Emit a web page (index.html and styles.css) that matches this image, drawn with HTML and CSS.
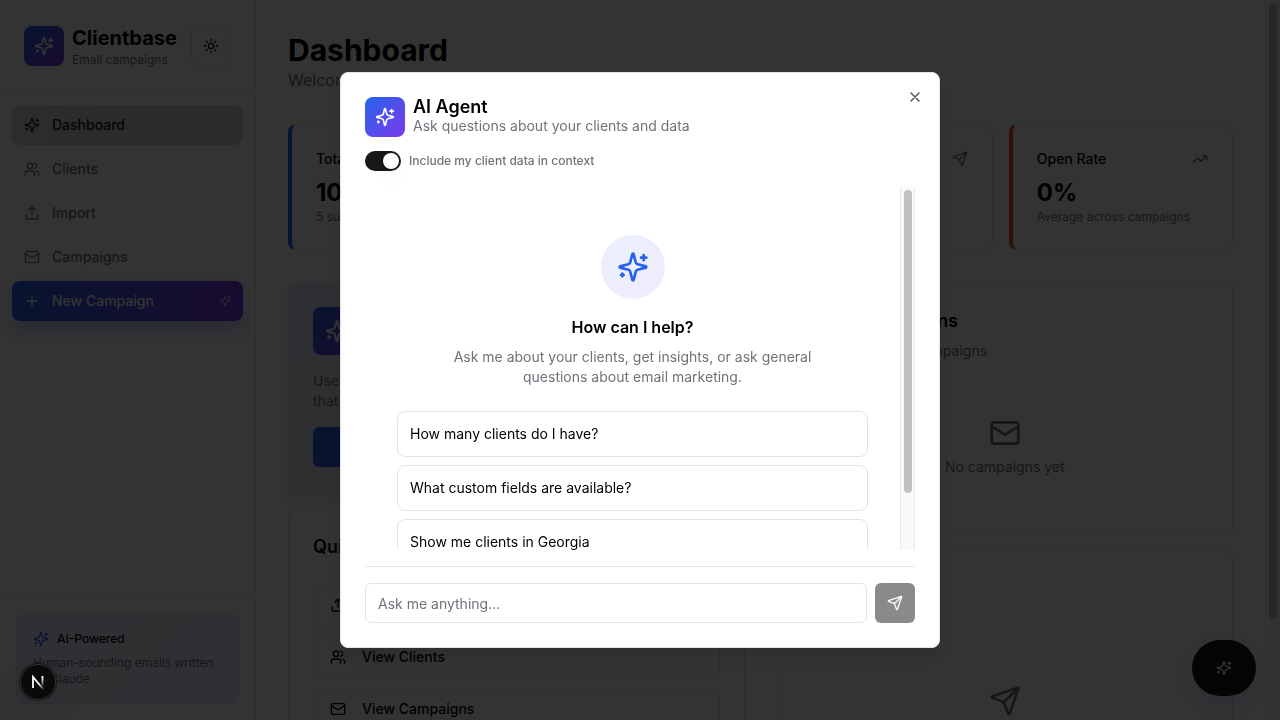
FILE: index.html
```html
<!DOCTYPE html>
<html lang="en">
<head>
<meta charset="utf-8">
<meta name="viewport" content="width=device-width, initial-scale=1">
<title>Clientbase</title>
<link rel="stylesheet" href="styles.css">
</head>
<body>
<svg class="sprite" aria-hidden="true">
  <symbol id="sparkles" viewBox="0 0 24 24"><path d="M9.937 15.5A2 2 0 0 0 8.5 14.063l-6.135-1.582a.5.5 0 0 1 0-.962L8.5 9.936A2 2 0 0 0 9.937 8.5l1.582-6.135a.5.5 0 0 1 .963 0L14.063 8.5A2 2 0 0 0 15.5 9.937l6.135 1.581a.5.5 0 0 1 0 .964L15.5 14.063a2 2 0 0 0-1.437 1.437l-1.582 6.135a.5.5 0 0 1-.963 0z"/><path d="M20 3v4M22 5h-4M4 17v2M5 18H3"/></symbol>
  <symbol id="users" viewBox="0 0 24 24"><path d="M16 21v-2a4 4 0 0 0-4-4H6a4 4 0 0 0-4 4v2"/><circle cx="9" cy="7" r="4"/><path d="M22 21v-2a4 4 0 0 0-3-3.87M16 3.13a4 4 0 0 1 0 7.75"/></symbol>
  <symbol id="upload" viewBox="0 0 24 24"><path d="M21 15v4a2 2 0 0 1-2 2H5a2 2 0 0 1-2-2v-4M17 8l-5-5-5 5M12 3v12"/></symbol>
  <symbol id="mail" viewBox="0 0 24 24"><rect x="2" y="4" width="20" height="16" rx="2"/><path d="m22 7-8.97 5.7a1.94 1.94 0 0 1-2.06 0L2 7"/></symbol>
  <symbol id="plus" viewBox="0 0 24 24"><path d="M5 12h14M12 5v14"/></symbol>
  <symbol id="close" viewBox="0 0 24 24"><path d="M18 6 6 18M6 6l12 12"/></symbol>
  <symbol id="send" viewBox="0 0 24 24"><path d="M14.536 21.686a.5.5 0 0 0 .937-.024l6.5-19a.496.496 0 0 0-.635-.635l-19 6.5a.5.5 0 0 0-.024.937l7.93 3.18a2 2 0 0 1 1.112 1.11zM21.854 2.147l-10.94 10.939"/></symbol>
  <symbol id="trend" viewBox="0 0 24 24"><path d="M22 7l-8.500 8.500-5-5L2 17M16 7h6v6"/></symbol>
  <symbol id="sun" viewBox="0 0 24 24"><circle cx="12" cy="12" r="4"/><path d="M12 2v2M12 20v2M4.930 4.930l1.410 1.410M17.660 17.660l1.410 1.410M2 12h2M20 12h2M6.340 17.660l-1.410 1.410M19.070 4.930l-1.410 1.410"/></symbol>
</svg>

<div class="app">
  <aside class="sidebar">
    <header class="brand">
      <span class="tile"><svg class="icon icon-md"><use href="#sparkles"/></svg></span>
      <div class="brand-text">
        <p class="brand-name">Clientbase</p>
        <p class="caption">Email campaigns</p>
      </div>
      <button class="theme-button" type="button" aria-label="Toggle theme"><svg class="icon"><use href="#sun"/></svg></button>
    </header>
    <nav class="nav">
      <a class="nav-item active" href="#"><svg class="icon"><use href="#sparkles"/></svg>Dashboard</a>
      <a class="nav-item" href="#"><svg class="icon"><use href="#users"/></svg>Clients</a>
      <a class="nav-item" href="#"><svg class="icon"><use href="#upload"/></svg>Import</a>
      <a class="nav-item" href="#"><svg class="icon"><use href="#mail"/></svg>Campaigns</a>
      <a class="nav-item create" href="#"><svg class="icon"><use href="#plus"/></svg>New Campaign<svg class="icon icon-xs trailing"><use href="#sparkles"/></svg></a>
    </nav>
    <footer class="side-footer">
      <div class="powered">
        <p class="powered-title"><svg class="icon"><use href="#sparkles"/></svg>AI-Powered</p>
        <p class="caption">Human-sounding emails written by Claude</p>
      </div>
    </footer>
  </aside>

  <main class="main">
    <div class="heading">
      <h1>Dashboard</h1>
      <p>Welcome back</p>
    </div>
    <section class="stats">
      <article class="card stat blue">
        <div class="stat-head"><h2>Total Clients</h2><svg class="icon"><use href="#users"/></svg></div>
        <p class="stat-value">10</p><p class="caption">5 subscribed</p>
      </article>
      <article class="card stat">
        <div class="stat-head"><h2>Campaigns</h2><svg class="icon"><use href="#mail"/></svg></div>
        <p class="stat-value">0</p><p class="caption">0 sent</p>
      </article>
      <article class="card stat">
        <div class="stat-head"><h2>Emails Sent</h2><svg class="icon"><use href="#send"/></svg></div>
        <p class="stat-value">0</p><p class="caption">All time</p>
      </article>
      <article class="card stat orange">
        <div class="stat-head"><h2>Open Rate</h2><svg class="icon"><use href="#trend"/></svg></div>
        <p class="stat-value">0%</p><p class="caption">Average across campaigns</p>
      </article>
    </section>
    <div class="columns">
      <div class="column">
        <section class="card panel promo">
          <div class="promo-head"><span class="tile tile-lg"><svg class="icon icon-lg"><use href="#sparkles"/></svg></span><h2>AI Campaign</h2></div>
          <p class="muted">Use AI to write personalized emails<br>that sound human</p>
          <a class="promo-button" href="#">Create Campaign</a>
        </section>
        <section class="card panel">
          <h2>Quick Actions</h2>
          <div class="actions">
            <a class="action" href="#"><svg class="icon"><use href="#upload"/></svg>Import Clients</a>
            <a class="action" href="#"><svg class="icon"><use href="#users"/></svg>View Clients</a>
            <a class="action" href="#"><svg class="icon"><use href="#mail"/></svg>View Campaigns</a>
          </div>
        </section>
      </div>
      <div class="column">
        <section class="card panel">
          <h2>Latest Campaigns</h2>
          <p class="muted panel-note">Your latest email campaigns</p>
          <div class="empty"><svg class="icon icon-xl"><use href="#mail"/></svg><p>No campaigns yet</p></div>
        </section>
        <section class="card panel">
          <h2>Activity</h2>
          <p class="muted panel-note">Latest emails</p>
          <div class="empty"><svg class="icon icon-xl"><use href="#send"/></svg></div>
        </section>
      </div>
    </div>
  </main>
  <div class="scrollbar page-scrollbar" aria-hidden="true"><span class="thumb"></span></div>
  <button class="fab" type="button" aria-label="Open AI agent"><svg class="icon"><use href="#sparkles"/></svg></button>
</div>

<div class="overlay">
  <div class="dialog" role="dialog" aria-modal="true" aria-labelledby="dialog-title">
    <header class="dialog-head">
      <span class="tile"><svg class="icon icon-md"><use href="#sparkles"/></svg></span>
      <div>
        <h2 class="dialog-title" id="dialog-title">AI Agent</h2>
        <p class="muted">Ask questions about your clients and data</p>
      </div>
    </header>
    <div class="toggle">
      <input class="switch" type="checkbox" role="switch" id="context" checked>
      <label for="context">Include my client data in context</label>
    </div>
    <div class="chat">
      <div class="chat-body">
        <span class="orb"><svg class="icon icon-xl"><use href="#sparkles"/></svg></span>
        <h3>How can I help?</h3>
        <p class="muted intro">Ask me about your clients, get insights, or ask general questions about email marketing.</p>
        <div class="suggestions">
          <button class="suggestion" type="button">How many clients do I have?</button>
          <button class="suggestion" type="button">What custom fields are available?</button>
          <button class="suggestion" type="button">Show me clients in Georgia</button>
        </div>
      </div>
      <div class="scrollbar" aria-hidden="true"><span class="thumb"></span></div>
    </div>
    <form class="composer">
      <input class="prompt" type="text" placeholder="Ask me anything..." aria-label="Message">
      <button class="send" type="button" disabled aria-label="Send"><svg class="icon"><use href="#send"/></svg></button>
    </form>
    <button class="close" type="button" aria-label="Close"><svg class="icon"><use href="#close"/></svg></button>
  </div>
</div>

<button class="dev-badge" type="button" aria-label="Developer tools">
  <svg width="18" height="18" viewBox="0 0 18 18" fill="none">
    <defs>
      <linearGradient id="fade-a" x1="10" y1="11" x2="15" y2="17" gradientUnits="userSpaceOnUse"><stop stop-color="#fff"/><stop offset="1" stop-color="#fff" stop-opacity="0"/></linearGradient>
      <linearGradient id="fade-b" x1="14" y1="5" x2="14" y2="14" gradientUnits="userSpaceOnUse"><stop stop-color="#fff"/><stop offset="1" stop-color="#fff" stop-opacity="0"/></linearGradient>
    </defs>
    <path d="M4 15V4l10.500 12.500" stroke="url(#fade-a)" stroke-width="1.800"/>
    <path d="M13.500 3v12" stroke="url(#fade-b)" stroke-width="1.800"/>
  </svg>
</button>
</body>
</html>
```
FILE: styles.css
```css
:root {
  --border: #e4e4e7;
  --muted: #71717a;
  --blue: #2563eb;
  --violet: #7c3aed;
}
* { box-sizing: border-box; margin: 0; }
body {
  height: 100vh;
  overflow: hidden;
  background: #fff;
  color: #000;
  font-family: Inter, "Liberation Sans", sans-serif;
  font-size: 14px;
  line-height: 20px;
}
button, input { font: inherit; color: inherit; }
button { padding: 0; border: 0; background: none; }
a { color: inherit; text-decoration: none; }
.sprite { display: none; }
.icon {
  display: block;
  flex: none;
  width: 16px;
  height: 16px;
  fill: none;
  stroke: currentColor;
  stroke-width: 2;
  stroke-linecap: round;
  stroke-linejoin: round;
}
.icon-xs { width: 12px; height: 12px; }
.icon-md { width: 20px; height: 20px; }
.icon-lg { width: 24px; height: 24px; }
.icon-xl { width: 32px; height: 32px; }
.muted { color: var(--muted); }
.caption { color: var(--muted); font-size: 12px; line-height: 16px; }
.tile {
  display: flex;
  flex: none;
  align-items: center;
  justify-content: center;
  width: 40px;
  height: 40px;
  border-radius: 8px;
  background: linear-gradient(135deg, var(--blue), var(--violet));
  color: #fff;
}
.tile-lg { width: 48px; height: 48px; }

.app { display: flex; height: 100%; }
.sidebar {
  display: flex;
  flex: none;
  flex-direction: column;
  width: 256px;
  border-right: 1px solid var(--border);
}
.brand {
  display: flex;
  align-items: center;
  gap: 8px;
  padding: 24px;
  border-bottom: 1px solid var(--border);
}
.brand-text { flex: 1; min-width: 0; }
.brand-name { font-size: 20px; font-weight: 700; line-height: 28px; }
.theme-button {
  display: flex;
  flex: none;
  align-items: center;
  justify-content: center;
  width: 40px;
  height: 40px;
  border: 1px solid var(--border);
  border-radius: 6px;
}
.nav { display: flex; flex: 1; flex-direction: column; gap: 4px; padding: 12px; }
.nav-item {
  display: flex;
  align-items: center;
  gap: 12px;
  padding: 10px 12px;
  border-radius: 8px;
  color: var(--muted);
  font-weight: 500;
}
.nav-item.active { background: linear-gradient(90deg, #d5d9e1, #d8d8df); color: #18181b; }
.nav-item.create {
  background: linear-gradient(90deg, var(--blue), var(--violet));
  box-shadow: 0 8px 16px rgba(37, 99, 235, .3);
  color: #fff;
}
.trailing { margin-left: auto; opacity: .7; }
.side-footer { padding: 16px; border-top: 1px solid var(--border); }
.powered {
  padding: 16px;
  border: 1px solid #e4e4f4;
  border-radius: 8px;
  background: linear-gradient(135deg, #e9effd, #f2ebfd);
}
.powered-title {
  display: flex;
  align-items: center;
  gap: 8px;
  margin-bottom: 8px;
  font-size: 12px;
  font-weight: 500;
  line-height: 16px;
}
.powered-title .icon { color: var(--blue); }

.main { flex: 1; min-width: 0; padding: 32px; overflow: hidden; }
h1 { font-size: 30px; font-weight: 700; line-height: 36px; }
.heading p { color: var(--muted); font-size: 16px; line-height: 24px; }
.card { border: 1px solid var(--border); border-radius: 8px; }
.stats { display: grid; grid-template-columns: repeat(4, 1fr); gap: 16px; margin: 32px 0; }
.stat { padding: 24px; border-left: 4px solid var(--violet); }
.stat.blue { border-left-color: var(--blue); }
.stat.orange { border-left-color: #ea580c; }
.stat-head { display: flex; align-items: center; justify-content: space-between; padding-bottom: 8px; }
.stat-head h2 { font-size: 14px; font-weight: 500; line-height: 20px; }
.stat-head .icon { color: var(--muted); }
.stat-value { font-size: 24px; font-weight: 700; line-height: 32px; }
.columns { display: grid; grid-template-columns: 1fr 1fr; gap: 32px; }
.column { display: flex; flex-direction: column; gap: 16px; }
.panel { padding: 24px; }
.panel h2 { font-size: 18px; font-weight: 600; line-height: 28px; }
.panel-note { margin-top: 6px; }
.promo {
  background: linear-gradient(150deg, #e6ecf7, #f0eaf8);
  box-shadow: 0 8px 16px rgba(0, 0, 0, .1);
}
.promo-head { display: flex; align-items: center; gap: 12px; margin-bottom: 16px; }
.promo-button {
  display: block;
  margin-top: 16px;
  padding: 10px 16px;
  border-radius: 6px;
  background: linear-gradient(90deg, var(--blue), var(--violet));
  color: #fff;
  font-weight: 500;
  text-align: center;
}
.actions { display: flex; flex-direction: column; gap: 12px; margin-top: 24px; }
.action {
  display: flex;
  align-items: center;
  gap: 16px;
  height: 40px;
  padding: 0 16px;
  border: 1px solid var(--border);
  border-radius: 6px;
  font-weight: 500;
}
.empty {
  display: flex;
  flex-direction: column;
  align-items: center;
  gap: 8px;
  margin-top: 24px;
  padding: 32px 0;
  color: var(--muted);
}
.scrollbar {
  flex: none;
  width: 15px;
  padding: 3px;
  border: solid #e8e8e8;
  border-width: 0 1px;
  background: #fafafa;
}
.thumb {
  display: block;
  width: 8px;
  height: 85%;
  margin: 0 auto;
  border-radius: 4px;
  background: #c1c1c1;
}
.page-scrollbar .thumb { height: 86.3%; }
.fab {
  position: fixed;
  right: 24px;
  bottom: 24px;
  display: flex;
  align-items: center;
  justify-content: center;
  width: 64px;
  height: 56px;
  border-radius: 28px;
  background: #18181b;
  box-shadow: 0 8px 24px rgba(37, 99, 235, .2);
  color: #fff;
}

.overlay {
  position: fixed;
  inset: 0;
  display: flex;
  align-items: center;
  justify-content: center;
  background: rgba(0, 0, 0, .8);
}
.dialog {
  position: relative;
  display: flex;
  flex-direction: column;
  width: 100%;
  max-width: 600px;
  height: 80vh;
  padding: 24px;
  border: 1px solid var(--border);
  border-radius: 8px;
  background: #fff;
  box-shadow: 0 10px 16px rgba(0, 0, 0, .1);
}
.dialog-head { display: flex; align-items: center; gap: 8px; }
.dialog-title { font-size: 18px; font-weight: 600; line-height: 18px; }
.toggle { display: flex; align-items: center; gap: 8px; margin: 14px 0 16px; }
.toggle label { color: var(--muted); font-size: 12px; font-weight: 500; line-height: 16px; }
.switch {
  appearance: none;
  width: 36px;
  height: 20px;
  padding: 2px;
  border-radius: 10px;
  background: #18181b;
}
.switch::before {
  content: "";
  display: block;
  width: 16px;
  height: 16px;
  border-radius: 50%;
  background: #fff;
  box-shadow: 0 10px 16px rgba(0, 0, 0, .05);
}
.switch:checked::before { margin-left: auto; }
.chat { display: flex; flex: 1; min-height: 0; overflow: hidden; }
.chat-body {
  display: flex;
  flex: 1;
  flex-direction: column;
  align-items: center;
  padding: 48px 32px;
  text-align: center;
}
.orb {
  display: flex;
  flex: none;
  align-items: center;
  justify-content: center;
  width: 64px;
  height: 64px;
  margin-bottom: 16px;
  border-radius: 50%;
  background: linear-gradient(135deg, #e9effd, #f2ebfd);
  color: var(--blue);
}
h3 { margin-bottom: 8px; font-size: 16px; font-weight: 600; line-height: 24px; }
.intro { max-width: 384px; margin-bottom: 24px; }
.suggestions { display: flex; flex-direction: column; gap: 8px; width: 100%; }
.suggestion {
  padding: 12px;
  border: 1px solid var(--border);
  border-radius: 8px;
  text-align: left;
}
.composer {
  display: flex;
  gap: 8px;
  margin-top: 16px;
  padding-top: 16px;
  border-top: 1px solid var(--border);
}
.prompt {
  flex: 1;
  min-width: 0;
  height: 40px;
  padding: 0 12px;
  border: 1px solid var(--border);
  border-radius: 6px;
  background: #fff;
}
.prompt::placeholder { color: var(--muted); opacity: 1; }
.send {
  display: flex;
  flex: none;
  align-items: center;
  justify-content: center;
  width: 40px;
  height: 40px;
  border-radius: 6px;
  background: #18181b;
  color: #fff;
  opacity: .5;
}
.close { position: absolute; top: 16px; right: 16px; opacity: .7; }
.dev-badge {
  position: fixed;
  bottom: 20px;
  left: 20px;
  display: flex;
  align-items: center;
  justify-content: center;
  width: 36px;
  height: 36px;
  border: 1px solid #333;
  border-radius: 50%;
  background: #0a0a0a;
  box-shadow: 0 0 0 1px #171717, 0 16px 32px -8px rgba(0, 0, 0, .24);
}
```
